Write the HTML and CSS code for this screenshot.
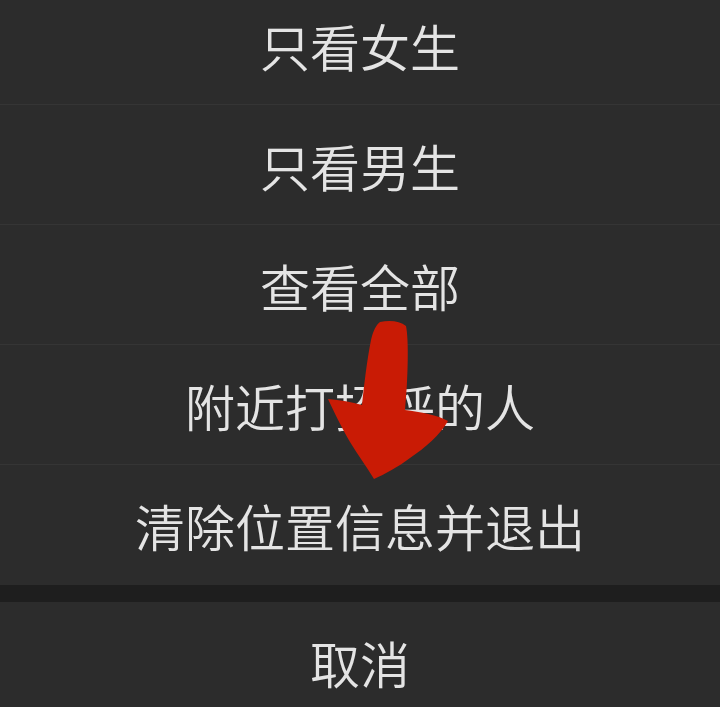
FILE: index.html
```html
<!DOCTYPE html>
<html lang="zh-CN">
<head>
    <meta charset="UTF-8">
    <meta name="viewport" content="width=device-width, initial-scale=1.0">
    <title>附近的人</title>
    <link rel="stylesheet" href="styles.css">
</head>
<body>
    <div class="sheet">
        <div class="menu">
            <div class="menu-item">只看女生</div>
            <div class="menu-item">只看男生</div>
            <div class="menu-item">查看全部</div>
            <div class="menu-item">附近打招呼的人</div>
            <div class="menu-item">清除位置信息并退出</div>
        </div>
        <div class="spacer"></div>
        <div class="menu-item cancel">取消</div>
    </div>

    <!-- hand-drawn marker arrow over the screenshot -->
    <svg class="arrow" width="720" height="707" viewBox="0 0 720 707">
        <path d="M380 322 C390 320 400 321 406 326 C409 340 408 380 405 410 C420 412 438 415 448 421 C440 435 425 448 410 458 C398 467 385 474 374 479 C366 466 358 455 350 442 C342 428 334 412 328 399 C340 400 352 402 362 405 C364 385 367 360 371 340 C373 331 376 325 380 322 Z" fill="#c91b05"/>
    </svg>
</body>
</html>
```

FILE: styles.css
```css
html, body {
    margin: 0;
    padding: 0;
}
body {
    width: 720px;
    height: 707px;
    overflow: hidden;
    background: #1e1e1e;
    font-family: "Noto Sans CJK SC", "Noto Sans", sans-serif;
    position: relative;
}
.sheet {
    margin-top: -15px;
    background: #1e1e1e;
}
.menu {
    background: #2c2c2c;
}
.menu-item {
    height: 119px;
    display: flex;
    align-items: center;
    justify-content: center;
    color: #e4e4e4;
    font-size: 50px;
    font-weight: 350;
    background: #2c2c2c;
    border-bottom: 1px solid #353535;
}
.menu-item:last-child {
    border-bottom: none;
    height: 120px;
}
.spacer {
    height: 17px;
    background: #1e1e1e;
}
.cancel {
    height: 120px;
    border-bottom: none;
}
.arrow {
    position: absolute;
    left: 0;
    top: 0;
}
```
